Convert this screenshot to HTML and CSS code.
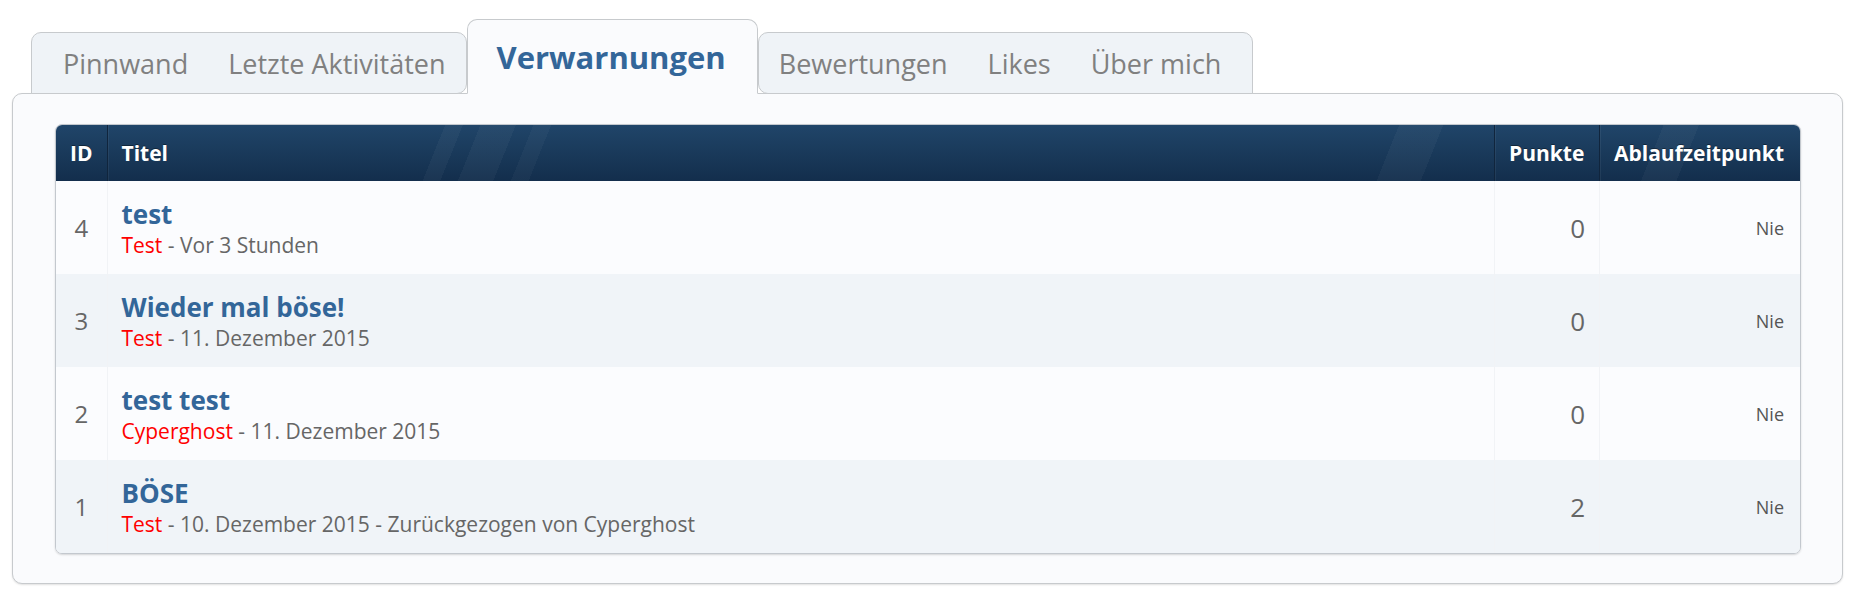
FILE: index.html
```html
<!DOCTYPE html>
<html lang="de">
<head>
<meta charset="UTF-8" />
<title>Profil - Verwarnungen</title>
<link rel="stylesheet" href="styles.css">
</head>
<body>
<div class="profile">
  <div class="tab-menu">
    <ul class="tab-group first">
      <li>Pinnwand</li>
      <li>Letzte Aktivitäten</li>
    </ul>
    <div class="tab-active">Verwarnungen</div>
    <ul class="tab-group last">
      <li>Bewertungen</li>
      <li>Likes</li>
      <li>Über mich</li>
    </ul>
  </div>

  <div class="panel">
    <table class="warnings">
      <thead>
        <tr>
          <th class="col-id">ID</th>
          <th class="col-title">Titel</th>
          <th class="col-points">Punkte</th>
          <th class="col-expires">Ablaufzeitpunkt</th>
        </tr>
      </thead>
      <tbody>
        <tr>
          <td class="col-id">4</td>
          <td class="col-title">
            <a class="warn-title">test</a>
            <div class="meta"><span class="user">Test</span> - Vor 3 Stunden</div>
          </td>
          <td class="col-points">0</td>
          <td class="col-expires">Nie</td>
        </tr>
        <tr>
          <td class="col-id">3</td>
          <td class="col-title">
            <a class="warn-title">Wieder mal böse!</a>
            <div class="meta"><span class="user">Test</span> - 11. Dezember 2015</div>
          </td>
          <td class="col-points">0</td>
          <td class="col-expires">Nie</td>
        </tr>
        <tr>
          <td class="col-id">2</td>
          <td class="col-title">
            <a class="warn-title">test test</a>
            <div class="meta"><span class="user">Cyperghost</span> - 11. Dezember 2015</div>
          </td>
          <td class="col-points">0</td>
          <td class="col-expires">Nie</td>
        </tr>
        <tr>
          <td class="col-id">1</td>
          <td class="col-title">
            <a class="warn-title">BÖSE</a>
            <div class="meta"><span class="user">Test</span> - 10. Dezember 2015 - Zurückgezogen von Cyperghost</div>
          </td>
          <td class="col-points">2</td>
          <td class="col-expires">Nie</td>
        </tr>
      </tbody>
    </table>
  </div>
</div>
</body>
</html>
```

FILE: styles.css
```css
body {
  margin: 0;
  background: #fff;
  font-family: 'Open Sans', Lato, sans-serif;
  color: #666;
}
.profile {
  padding: 19px 8px 20px 12px;
}

/* tabs */
.tab-menu {
  display: flex;
  align-items: flex-end;
  padding-left: 19px;
  margin-bottom: -1px;
  position: relative;
  z-index: 1;
}
.tab-group {
  display: flex;
  align-items: center;
  margin: 0;
  list-style: none;
  height: 60px;
  background: #eff3f7;
  border: 1px solid #c7cacd;
  font-size: 27px;
  color: #808080;
}
.tab-group.first {
  padding: 0 0 0 11px;
  border-radius: 10px 10px 10px 0;
}
.tab-group.last {
  padding: 0 11px 0 0;
  border-radius: 10px 10px 0 10px;
}
.tab-group li {
  padding: 0 20px;
}
.tab-active {
  height: 73px;
  display: flex;
  align-items: center;
  padding: 0 31px 0 29px;
  background: #fafbfd;
  border: 1px solid #c7cacd;
  border-bottom: 1px solid #fafbfd;
  border-radius: 10px 10px 0 0;
  font-size: 31px;
  font-weight: 700;
  color: #336699;
}

/* panel */
.panel {
  background: #fafbfd;
  border: 1px solid #c7cacd;
  border-radius: 10px;
  box-shadow: 0 1px 2px rgba(0,0,0,0.12);
  padding: 30px 41px 29px 42px;
}

/* table */
.warnings {
  width: 100%;
  border-collapse: separate;
  border-spacing: 0;
  border: 1px solid #c3c8ce;
  border-radius: 7px;
  overflow: hidden;
  box-shadow: 0 1px 2px rgba(0,0,0,0.15);
}
.warnings thead tr {
  background:
    linear-gradient(112deg,
      transparent 22%, rgba(255,255,255,0.035) 22%, rgba(255,255,255,0.035) 23%,
      transparent 23%, transparent 24%, rgba(255,255,255,0.035) 24%, rgba(255,255,255,0.035) 26%,
      transparent 26%, transparent 27%, rgba(255,255,255,0.03) 27%, rgba(255,255,255,0.03) 28%,
      transparent 28%, transparent 76%, rgba(255,255,255,0.035) 76%, rgba(255,255,255,0.035) 78.5%,
      transparent 78.5%, transparent 91%, rgba(255,255,255,0.035) 91%, rgba(255,255,255,0.035) 93%,
      transparent 93%),
    linear-gradient(#204569, #132e4c);
}
.warnings th {
  height: 56px;
  padding: 0 14px;
  color: #fff;
  font-size: 21px;
  font-weight: 700;
  text-align: left;
  text-shadow: 0 -1px 0 rgba(0,0,0,0.4);
  border-left: 1px solid #10253d;
  box-shadow: inset 1px 0 0 rgba(255,255,255,0.06);
}
.warnings th:first-child {
  border-left: none;
  box-shadow: none;
}
.warnings td {
  height: 93px;
  padding: 0 14px;
  border-left: 1px solid #f1f3f6;
  vertical-align: middle;
}
.warnings td:first-child {
  border-left: none;
}
.warnings tbody tr:nth-child(odd) {
  background: #fbfcfe;
}
.warnings tbody tr:nth-child(even) {
  background: #f0f4f8;
}
.col-id {
  width: 22px;
  text-align: center;
}
td.col-id {
  font-size: 24px;
  color: #666;
}
.col-title {
  padding-left: 16px;
}
.col-points {
  width: 76px;
  text-align: right;
}
td.col-points {
  font-size: 26px;
  color: #666;
}
.col-expires {
  width: 170px;
  text-align: right;
}
td.col-expires {
  font-size: 18px;
  color: #555;
  padding-right: 16px;
}
.warn-title {
  display: block;
  font-size: 26px;
  font-weight: 700;
  color: #336699;
  line-height: 32px;
}
.meta {
  margin-top: 2px;
  font-size: 21px;
  line-height: 26px;
  color: #666;
}
.meta .user {
  color: #f00;
}
```
